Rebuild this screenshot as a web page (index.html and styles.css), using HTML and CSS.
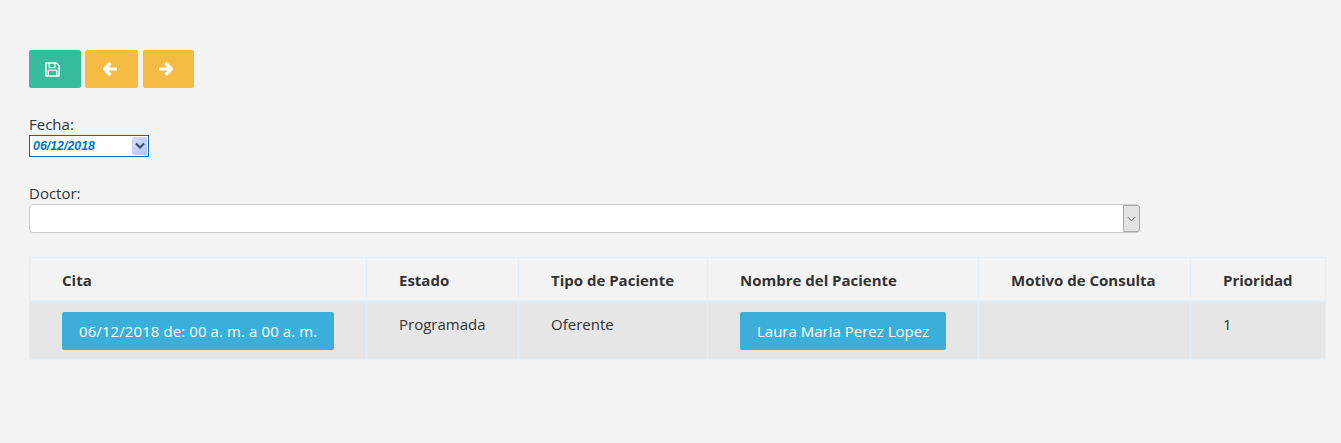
FILE: index.html
```html
<!DOCTYPE html>
<html lang="es">
<head>
    <meta charset="UTF-8">
    <meta name="viewport" content="width=device-width, initial-scale=1.0">
    <title>Citas</title>
    <link rel="stylesheet" href="styles.css">
</head>
<body>
    <div class="toolbar">
        <button class="btn btn-save">
            <svg xmlns="http://www.w3.org/2000/svg" viewBox="0 0 16 16" width="15" height="15">
                <path d="M1 1h11l3 3v11H1z" fill="none" stroke="currentColor" stroke-width="1.6" stroke-linejoin="round"/>
                <path d="M4.500 1v5h6V1" fill="none" stroke="currentColor" stroke-width="1.4"/>
                <path d="M3.500 15V9h9v6" fill="none" stroke="currentColor" stroke-width="1.4"/>
            </svg>
        </button>
        <button class="btn btn-nav btn-prev">
            <svg xmlns="http://www.w3.org/2000/svg" viewBox="0 0 16 16" width="16" height="16">
                <path d="M15 8H3.500M8.500 2L2.500 8l6 6" fill="none" stroke="currentColor" stroke-width="3.2" stroke-linejoin="round"/>
            </svg>
        </button>
        <button class="btn btn-nav btn-next">
            <svg xmlns="http://www.w3.org/2000/svg" viewBox="0 0 16 16" width="16" height="16">
                <path d="M1 8h11.500M7.500 2l6 6-6 6" fill="none" stroke="currentColor" stroke-width="3.2" stroke-linejoin="round"/>
            </svg>
        </button>
    </div>

    <div class="field field-fecha">
        <label>Fecha:</label>
        <div class="date-input">
            <span class="date-value">06/12/2018</span>
            <span class="date-arrow">
                <svg xmlns="http://www.w3.org/2000/svg" viewBox="0 0 10 8" width="10" height="8">
                    <path d="M1 1.500l4 4 4-4" fill="none" stroke="#3a4a6b" stroke-width="2"/>
                </svg>
            </span>
        </div>
    </div>

    <div class="field field-doctor">
        <label>Doctor:</label>
        <div class="doctor-select">
            <span class="select-arrow">
                <svg xmlns="http://www.w3.org/2000/svg" viewBox="0 0 10 6" width="9" height="6">
                    <path d="M1 1l4 4 4-4" fill="none" stroke="#444" stroke-width="1"/>
                </svg>
            </span>
        </div>
    </div>

    <table class="citas">
        <colgroup>
            <col class="col-cita">
            <col class="col-estado">
            <col class="col-tipo">
            <col class="col-nombre">
            <col class="col-motivo">
            <col class="col-prioridad">
        </colgroup>
        <thead>
            <tr>
                <th>Cita</th>
                <th>Estado</th>
                <th>Tipo de Paciente</th>
                <th>Nombre del Paciente</th>
                <th>Motivo de Consulta</th>
                <th>Prioridad</th>
            </tr>
        </thead>
        <tbody>
            <tr>
                <td><button class="btn btn-info btn-fecha">06/12/2018 de: 00 a. m. a 00 a. m.</button></td>
                <td>Programada</td>
                <td>Oferente</td>
                <td><button class="btn btn-info">Laura Maria Perez Lopez</button></td>
                <td></td>
                <td>1</td>
            </tr>
        </tbody>
    </table>
</body>
</html>
```

FILE: styles.css
```css
body {
    margin: 0;
    padding: 50px 15px 0 29px;
    background: #f3f3f3;
    color: #333;
    font-family: "Open Sans", "Noto Sans", sans-serif;
    font-size: 15px;
    line-height: 20px;
}

.toolbar {
    display: flex;
    gap: 4px;
    height: 38px;
}

.btn {
    display: inline-flex;
    align-items: center;
    justify-content: center;
    height: 38px;
    padding: 0;
    border: none;
    border-radius: 2px;
    color: white;
    font-family: inherit;
    font-size: 15px;
}

.btn-save {
    width: 52px;
    padding-right: 5px;
    background: #37bc9b;
}

.btn-nav {
    background: #f6bb42;
}

.btn-prev {
    width: 53px;
    padding-right: 3px;
}

.btn-next {
    width: 51px;
    padding-right: 5px;
    margin-left: 1px;
}

.btn-info {
    padding: 0 17px;
    background: #3bafda;
    vertical-align: top;
}

.btn-fecha {
    letter-spacing: 0.09px;
}

.field label {
    display: block;
    margin-bottom: 1px;
}

.field-fecha {
    margin-top: 26px;
}

.date-input {
    display: flex;
    align-items: center;
    justify-content: space-between;
    box-sizing: border-box;
    width: 120px;
    height: 22px;
    padding: 0 1px 0 3px;
    border: 1px solid #0a64ad;
    background: white;
}

.date-value {
    color: #0a6ebd;
    font-family: "Liberation Sans", Arial, sans-serif;
    font-size: 12.4px;
    font-style: italic;
    font-weight: bold;
}

.date-arrow {
    display: flex;
    align-items: center;
    justify-content: center;
    width: 15px;
    height: 18px;
    border-radius: 2px;
    background: linear-gradient(to bottom right, #d5e0fb, #afc2f0);
}

.field-doctor {
    margin-top: 26px;
}

.doctor-select {
    display: flex;
    justify-content: flex-end;
    box-sizing: border-box;
    width: 1111px;
    height: 29px;
    border: 1px solid #ccc;
    border-radius: 4px;
    background: white;
}

.select-arrow {
    display: flex;
    align-items: center;
    justify-content: center;
    box-sizing: border-box;
    width: 17px;
    margin-right: -1px;
    border: 1px solid #a9a9a9;
    border-radius: 0 3px 3px 0;
    background: #e3e3e3;
}

.citas {
    width: 1297px;
    margin-top: 24px;
    border-collapse: collapse;
    table-layout: fixed;
}

.col-cita { width: 337px; }
.col-estado { width: 152px; }
.col-tipo { width: 189px; }
.col-nombre { width: 271px; }
.col-motivo { width: 212px; }
.col-prioridad { width: 135px; }

.citas th,
.citas td {
    box-sizing: border-box;
    padding: 10px 32px 0;
    border: 1px solid #e6eef5;
    line-height: 24px;
    text-align: left;
    vertical-align: top;
    white-space: nowrap;
}

.citas th {
    height: 43px;
    font-weight: bold;
}

.citas thead th {
    border-bottom-width: 2px;
}

.citas td {
    height: 59px;
    background: #e6e6e6;
}
```
